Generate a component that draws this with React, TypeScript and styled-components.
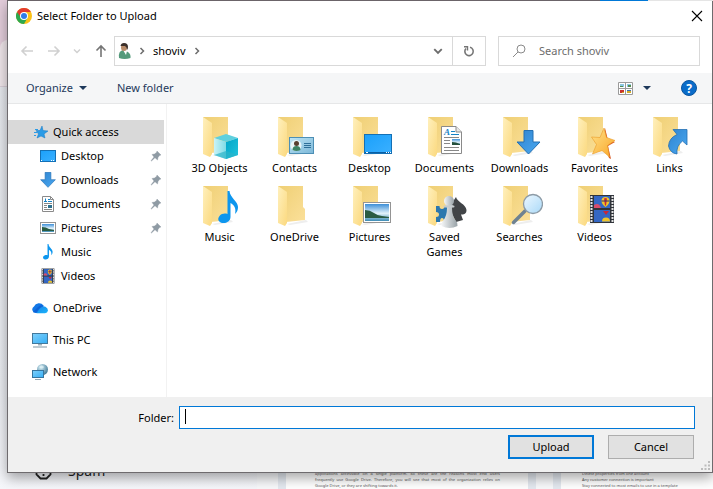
import React from "react";
import styled, { createGlobalStyle } from "styled-components";

const GlobalStyle = createGlobalStyle`
  *, *::before, *::after { box-sizing: border-box; }
  body { margin: 0; font-family: "Noto Sans", "Open Sans", sans-serif; font-size: 11px; line-height: 15px; color: #000; }
  button, input { font: inherit; color: inherit; }
  button { padding: 0; border: 0; background: none; }
  ul { list-style: none; margin: 0; padding: 0; }
  svg { display: block; flex: none; }
`;

const Page = styled.div`
  position: relative;
  min-height: 100vh;
  padding: 0 0 16px 7px;
  overflow: hidden;
`;

/* Browser window behind the dialog */
const Backdrop = styled.div`
  position: absolute;
  inset: 0;
  display: flex;
  background: linear-gradient(#e4e7ec, #eaecf1 80%, #f6f7fb);
`;
const MailNav = styled.div`
  width: 257px;
  flex: none;
  display: flex;
  flex-direction: column;
  justify-content: space-between;
`;
const TabStrip = styled.div`
  height: 87px;
  padding-top: 40px;
  background: #e3cddb;
  border-bottom: 1px solid #d9cfd8;
`;
const TabShape = styled.div`
  height: 46px;
  border-radius: 8px 0 0 0;
  background: #efe6ea;
`;
const NavItem = styled.div`
  display: flex;
  align-items: center;
  gap: 16px;
  padding: 0 0 8px 35px;
  font-size: 14px;
  line-height: 20px;
  color: #222;
`;
const Cards = styled.div`
  flex: 1;
  display: flex;
  align-items: flex-end;
  gap: 17px;
  padding-left: 21px;
  background: #f8f9fb;
`;
const Card = styled.div<{ $wide?: boolean }>`
  flex: ${(p) => (p.$wide ? "0 0 258px" : "1 1 0")};
  min-width: 0;
  padding: 0 28px;
  padding-left: ${(p) => (p.$wide ? 29 : 21)}px;
  border: 0 solid #e4e9f0;
  border-width: ${(p) => (p.$wide ? "0 8px" : "0 0 0 8px")};
  background: #fff;
  color: #555;
  font-size: 4px;
  line-height: 6px;
  white-space: nowrap;
`;
const Line = styled.div<{ $full?: boolean }>`
  text-align-last: ${(p) => (p.$full ? "justify" : "left")};
`;

const Dialog = styled.section`
  position: relative;
  display: flex;
  flex-direction: column;
  min-height: calc(100vh - 16px);
  border: 1px solid #6e6b6e;
  border-top: 0;
  background: #fff;
  box-shadow: 0 5px 12px rgba(0, 0, 0, 0.35);
`;
const TopEdge = styled.div`
  height: 1px;
  margin: 0 -1px;
  background: linear-gradient(to left, #e5e5e5 65px, #0078d7 65px 113px, #6b6469 113px);
`;
const TitleBar = styled.header`
  display: flex;
  align-items: center;
  gap: 5px;
  height: 30px;
  padding: 0 8px;
`;
const Title = styled.h1`
  flex: 1;
  margin: 0;
  padding-bottom: 2px;
  font-size: 11px;
  font-weight: 400;
`;
const IconButton = styled.button`
  display: flex;
  align-items: center;
  justify-content: center;
`;
const AddressRow = styled.div`
  display: flex;
  align-items: center;
  padding: 5px 12px 7px;
`;
const History = styled.div`
  display: flex;
  align-items: center;
  width: 94px;
  justify-content: space-between;
  padding-right: 6px;
`;
const AddressBox = styled.div`
  flex: 1;
  display: flex;
  height: 30px;
  margin-right: 12px;
  border: 1px solid #d9d9d9;
`;
const Crumbs = styled.div`
  flex: 1;
  display: flex;
  align-items: center;
  gap: 7px;
  padding: 0 9px 0 3px;
`;
const Crumb = styled.span`
  padding-bottom: 2px;
`;
const Spacer = styled.div`
  flex: 1;
`;
const RefreshButton = styled(IconButton)`
  width: 33px;
  border-left: 1px solid #d9d9d9;
`;
const SearchBox = styled.label`
  display: flex;
  align-items: center;
  gap: 13px;
  width: 202px;
  height: 30px;
  padding: 0 13px;
  border: 1px solid #d9d9d9;
`;
const SearchInput = styled.input`
  flex: 1;
  min-width: 0;
  padding: 0 0 2px;
  border: 0;
  outline: 0;
  &::placeholder { color: #6d6d6d; opacity: 1; }
`;

const Toolbar = styled.div`
  display: flex;
  align-items: center;
  height: 31px;
  padding: 0 15px 0 18px;
  border-bottom: 1px solid #e6e7e8;
  background: #f5f6f7;
  color: #1e395b;
`;
const ToolButton = styled.button<{ $after?: number }>`
  display: flex;
  align-items: center;
  gap: 6px;
  margin-right: ${(p) => p.$after ?? 0}px;
`;
const ToolLabel = styled.span`
  padding-bottom: 2px;
`;

const Body = styled.div`
  flex: 1;
  display: flex;
`;
const Sidebar = styled.nav`
  width: 159px;
  flex: none;
  display: flex;
  flex-direction: column;
  gap: 8px;
  padding: 16px 2px 0 0;
  border-right: 1px solid #f2f2f2;
`;
const TreeRow = styled.button<{ $child?: boolean; $selected?: boolean }>`
  display: flex;
  align-items: center;
  gap: 5px;
  width: 100%;
  height: 24px;
  padding: 0 2px 0 ${(p) => (p.$child ? 32 : 24)}px;
  background: ${(p) => (p.$selected ? "#d9d9d9" : "transparent")};
  text-align: left;
`;
const TreeLabel = styled.span`
  flex: 1;
  padding-bottom: 2px;
`;
const Files = styled.ul`
  && { padding: 9px 5px 0 15px; }
  flex: 1;
  display: grid;
  grid-template-columns: repeat(auto-fill, 75px);
  gap: 7px 0;
  align-content: start;
`;
const Tile = styled.button`
  display: flex;
  flex-direction: column;
  align-items: center;
  width: 75px;
  padding: 0 6px;
  text-align: center;
`;
const TileIcon = styled.svg`
  margin: 0 1px -1px 0;
`;

const Footer = styled.form`
  display: flex;
  flex-direction: column;
  gap: 6px;
  padding: 9px 17px 13px 8px;
  background: #f0f0f0;
  position: relative;
`;
const FieldRow = styled.div`
  display: flex;
  align-items: center;
  gap: 5px;
`;
const FieldLabel = styled.label`
  width: 158px;
  text-align: right;
`;
const Field = styled.div`
  flex: 1;
  display: flex;
  align-items: center;
  height: 23px;
  padding: 0 5px 2px;
  border: 1px solid #0078d7;
  background: #fff;
`;
const Caret = styled.span`
  width: 1px;
  height: 15px;
  background: #000;
`;
const FieldInput = styled.input`
  flex: 1;
  min-width: 0;
  padding: 0;
  border: 0;
  outline: 0;
  background: none;
  caret-color: transparent;
`;
const Actions = styled.div`
  display: flex;
  justify-content: flex-end;
  gap: 14px;
  padding-right: 1px;
`;
const ActionButton = styled.button<{ $primary?: boolean }>`
  width: 86px;
  height: 24px;
  padding-bottom: 2px;
  border: ${(p) => (p.$primary ? "2px solid #0078d7" : "1px solid #adadad")};
  background: #e1e1e1;
`;
const Grip = styled.svg`
  position: absolute;
  right: 2px;
  bottom: 2px;
`;
const HiddenDefs = styled.svg`
  position: absolute;
`;

function Gradient({ id, from, to, flat }: { id: string; from: string; to: string; flat?: boolean }) {
  return (
    <linearGradient id={id} x1="0" y1="0" x2="1" y2={flat ? "0" : "1"}>
      <stop offset="0" stopColor={from} />
      <stop offset="1" stopColor={to} />
    </linearGradient>
  );
}

function SharedDefs() {
  return (
    <HiddenDefs width="0" height="0" aria-hidden="true">
      <defs>
        <Gradient id="back" from="#efcf74" to="#fbe09a" />
        <Gradient id="leaf" from="#fff0bd" to="#fbd97f" />
        <Gradient id="screen" from="#1aa0fb" to="#3bb0ff" />
        <Gradient id="blue" from="#2f84d0" to="#4aa8f0" />
        <Gradient id="cubeL" from="#c9f3f7" to="#7fdbe6" flat />
        <Gradient id="cubeR" from="#00a5c8" to="#22c3dc" />
        <Gradient id="card" from="#bfe6f5" to="#7cb7d8" />
        <Gradient id="star" from="#ffe28a" to="#f9a526" />
        <Gradient id="lens" from="#eef8ff" to="#a9d9f8" />
        <Gradient id="pawn" from="#f4f6f7" to="#97a1a6" flat />
        <Gradient id="monitor" from="#7fd0fb" to="#35aef5" />
        <Gradient id="cloud" from="#1686e8" to="#1cb4fb" />
        <linearGradient id="sky" x1="0" y1="0" x2="0" y2="1">
          <stop offset="0" stopColor="#3d8fd8" />
          <stop offset="0.55" stopColor="#e3f3fb" />
          <stop offset="1" stopColor="#3c8bb5" />
        </linearGradient>
        <radialGradient id="globe" cx="0.35" cy="0.3" r="0.8">
          <stop offset="0" stopColor="#d5edf5" />
          <stop offset="1" stopColor="#34708f" />
        </radialGradient>
      </defs>
    </HiddenDefs>
  );
}

/* Overlay art, drawn in the 48×48 space of a folder tile */
const art = {
  cube: (
    <g>
      <path d="M31 21 43 25 31 29 19 25z" fill="#5fd0de" />
      <path d="M19 25 31 29V46L19 42z" fill="url(#cubeL)" />
      <path d="M43 25 31 29V46L43 42z" fill="url(#cubeR)" />
      <path d="M19 42 31 38 43 42 31 46z" fill="#2bb3c9" opacity=".7" />
    </g>
  ),
  contact: (
    <g>
      <rect x="19.500" y="24.500" width="24" height="16" fill="url(#card)" stroke="#4d8fb5" />
      <circle cx="26" cy="32.500" r="5.500" fill="#e9f5f8" />
      <circle cx="26.500" cy="30.500" r="2.500" fill="#594030" />
      <path d="M22.500 37q0-4 4-4t4 4q-4 2-8 0z" fill="#3c8365" />
      <path d="M34 30.500h7M34 32.500h7M34 34.500h7" stroke="#2f7099" />
    </g>
  ),
  desktop: (
    <g>
      <rect x="19.500" y="21.500" width="27" height="19" fill="url(#screen)" stroke="#1470b5" />
      <path d="M20 39h26v1H20z" fill="#0a5ea3" />
      <path d="M21 39.500h2M41 39.500h1M43 39.500h1M45 39.500h1" stroke="#fff" />
    </g>
  ),
  document: (
    <g>
      <path d="M21.500 13.500H36L41.500 19V40.500h-20z" fill="#fff" stroke="#8a8a8a" />
      <path d="M36 13.500V19h5.500" fill="#e8e8e8" stroke="#8a8a8a" />
      <text x="24" y="22" fontFamily="Liberation Serif, serif" fontWeight="700" fontStyle="italic" fontSize="9" fill="#1783c5">A</text>
      <path d="M31 18.500h4M31 21.500h8" stroke="#1783c5" />
      <path d="M24 24.500h15M24 27.500h6M24 30.500h6M24 34.500h15M24 37.500h15" stroke="#888" />
      <rect x="32" y="26" width="8" height="6" fill="url(#sky)" />
      <path d="M32 29q4 0 8 2v1h-8z" fill="#24503d" />
    </g>
  ),
  download: <path d="M29 17.500h9V29h7L33.500 41 22 29h7z" fill="url(#blue)" stroke="#2470b3" />,
  star: (
    <g>
      <path d="M35 15l-3 10 7 20 2 1-3-13 7-4-7-2z" fill="#d9561e" />
      <path d="M34 15l2.500 9.500 8.500 3-7.500 5L39.500 44 32 37.500 22.500 41l4-9.500L21.500 24l8.500.5z" fill="url(#star)" stroke="#e99a26" strokeWidth=".6" />
    </g>
  ),
  link: <path d="M28 16.500H42V32L37.500 28Q31 33 32 41 25 40 23.500 33 24 25 32 21.500z" fill="url(#blue)" stroke="#2470b3" strokeWidth=".8" />,
  music: (
    <path d="M32.500 9h2c.5 7 8.500 10 8.500 16 0 3-1 5-3 7 1.500-6-1-9-4.500-11v14c0 4-4 6.500-8 6-4-.5-5.500-4-3-7 2-2.500 5.500-3 8-2z" fill="#0d96ee" />
  ),
  picture: (
    <g>
      <rect x="18.500" y="20.500" width="27" height="20" fill="#fff" stroke="#949494" />
      <rect x="20" y="22" width="24" height="17" fill="url(#sky)" />
      <path d="M20 28q5 0 9 3t8 3l7 1v1H20z" fill="#2a5c43" />
    </g>
  ),
  games: (
    <g>
      <path d="M16 24h3.500q0 3 2.500 3t2.500-3H28v15h-4q0-3-2-3t-2 4h-4v-5q3 0 3-2.500T16 30z" fill="#2c78ae" />
      <path d="M36 15c1 5 10 7 10.500 13 0 4-3 5-5.500 4.500l2 5.500-7 2-4-8V21z" fill="#414447" />
      <path d="M26 23h7l-1 3q0 8 4 13 2 2 1.500 5-8 4-16 0Q21 41 23 39q4-5 4-13z" fill="url(#pawn)" />
      <circle cx="29" cy="19" r="5" fill="url(#pawn)" />
      <path d="M24.500 24.500h9" stroke="#c5cbce" strokeWidth="2" strokeLinecap="round" />
    </g>
  ),
  search: (
    <g>
      <path d="M30 29 18.500 40.500" stroke="#6f8291" strokeWidth="3.500" strokeLinecap="round" />
      <circle cx="38" cy="22" r="9.500" fill="url(#lens)" stroke="#8d9ba6" strokeWidth="1.300" />
    </g>
  ),
  video: (
    <g>
      <rect x="20" y="13" width="24" height="28" fill="#30343a" />
      <path d="M21.500 14v26M42.500 14v26" stroke="#e4e4e4" strokeWidth="2" strokeDasharray="2 1" />
      <rect x="24" y="14" width="16" height="12" fill="#3467c4" />
      <rect x="24" y="28" width="16" height="12" fill="#3467c4" />
      <path d="M24 23q5-3 7 3h-7z" fill="#d84c6c" />
      <path d="M31.500 19a4 4 0 0 1 8 0q0 3-4 6-4-3-4-6zM32 39.500a4 4 0 0 1 8 0z" fill="#f0c52a" />
      <path d="M34 16.500q1.500-1 3 0l-1 7h-1zM33 29h6l-3 4z" fill="#c8283a" />
      <path d="M31.500 19h8" stroke="#353070" strokeWidth="1" />
    </g>
  ),
};
type ArtName = keyof typeof art;

function FolderIcon({ overlay }: { overlay?: ArtName }) {
  return (
    <TileIcon width="48" height="48" viewBox="0 0 48 48" aria-hidden="true">
      <path d="M17 42 36 38 38 40 20 43z" fill="#eee" />
      <path d="M8 4H33V25l2 2V38L16 40 8 36z" fill="url(#back)" />
      <path d="M8 4 17 10V41l-2 3-7-3z" fill="url(#leaf)" />
      {overlay && art[overlay]}
    </TileIcon>
  );
}

function SmallArt({ name, box }: { name: ArtName; box: string }) {
  return (
    <svg width="16" height="16" viewBox={box} aria-hidden="true">
      {art[name]}
    </svg>
  );
}

const SmallDesktop = () => (
  <svg width="16" height="16" viewBox="0 0 16 16" aria-hidden="true">
    <rect x=".5" y="2.500" width="15" height="11" fill="url(#screen)" stroke="#1470b5" />
    <path d="M1 12.500h1M11 12.500h1M13 12.500h1" stroke="#fff" />
  </svg>
);
const SmallDocument = () => (
  <svg width="16" height="16" viewBox="0 0 16 16" aria-hidden="true">
    <path d="M2.500.5h8l3 3v12h-11z" fill="#fff" stroke="#8a8a8a" />
    <path d="M10.500.5v3h3" fill="none" stroke="#8a8a8a" />
    <path d="M4 5.500h3M8 3.500h2M8 5.500h4M5.500 2.500v3" stroke="#1783c5" />
    <path d="M4 7.500h8M4 9.500h3M4 11.500h3M4 13.500h8" stroke="#888" />
    <path d="M8 9h4v3H8z" fill="#2d6f8c" />
  </svg>
);
const SmallPicture = () => (
  <svg width="16" height="16" viewBox="0 0 16 16" aria-hidden="true">
    <rect x=".5" y="2.500" width="15" height="11" fill="#fff" stroke="#949494" />
    <rect x="2" y="4" width="12" height="8" fill="url(#sky)" />
    <path d="M2 7q4 0 7 2l5 1v1H2z" fill="#2a5c43" />
  </svg>
);
const QuickStar = () => (
  <svg width="16" height="16" viewBox="0 0 16 16" aria-hidden="true">
    <path d="M10 2l1 4.500 5 .5-4 3 1 4-4-2-4 2 1.500-4L4 6.500h4z" fill="#2b9be6" stroke="#1479c4" strokeWidth=".5" />
    <path d="M3 5.500h3M2 8.500h3M2 11.500h2" stroke="#2b9be6" />
  </svg>
);
const CloudIcon = () => (
  <svg width="16" height="16" viewBox="0 0 16 16" aria-hidden="true">
    <path d="M3.500 13A3.500 3.500 0 0 1 2 6.500 5.500 5.500 0 0 1 11.500 5.500L12 13z" fill="#1377e6" />
    <path d="M5 13Q8 6 13 6.500 16 8 16 10.500 15.500 13 13 13.200H4z" fill="url(#cloud)" />
    <path d="M1 12Q4 14 7 9q2-3 5-3Q9 4 6 7T1 12z" fill="#0a55cf" opacity=".6" />
  </svg>
);
const PcIcon = () => (
  <svg width="16" height="16" viewBox="0 0 16 16" aria-hidden="true">
    <rect x=".5" y="1.500" width="15" height="10" fill="url(#monitor)" stroke="#43799c" />
    <path d="M6 12h4v1.500H6z" fill="#9fb0ba" />
    <path d="M1 15h14" stroke="#93a7b3" strokeWidth="1.200" />
  </svg>
);
const NetworkIcon = () => (
  <svg width="16" height="16" viewBox="0 0 16 16" aria-hidden="true">
    <circle cx="10.500" cy="5.500" r="5.500" fill="url(#globe)" />
    <path d="M7 3q3-3 5 0-2 3-5 0z" fill="#e3f3f7" opacity=".7" />
    <rect x=".5" y="6.500" width="11" height="7" fill="url(#monitor)" stroke="#35759f" />
    <path d="M3 15.500h6" stroke="#93a7b3" />
  </svg>
);
const PinIcon = () => (
  <svg width="12" height="12" viewBox="0 0 12 12" aria-hidden="true">
    <path d="M7 1l4 4-1.500.5L8 7.500 7.500 10 5 7.700 1.500 11 1 10.700 4 7 2 4.500 4.500 4 6.500 2.500z" fill="#8f9ba4" stroke="#8f9ba4" strokeWidth=".4" />
  </svg>
);
const ChromeIcon = () => (
  <svg width="16" height="16" viewBox="0 0 16 16" aria-hidden="true">
    <circle cx="8" cy="8" r="8" fill="#fbc116" />
    <path d="M8 8 1.070 4A8 8 0 0 0 8 16L11.460 10z" fill="#2da94f" />
    <path d="M1.070 4A8 8 0 0 1 14.930 4H8L5 9.500z" fill="#e33b2e" />
    <circle cx="8" cy="8" r="4" fill="#fff" />
    <circle cx="8" cy="8" r="3" fill="#2f7de9" />
  </svg>
);
const Arrow = ({ turn, color }: { turn: number; color: string }) => (
  <svg width="14" height="14" viewBox="0 0 14 14" aria-hidden="true">
    <path d="M13 7H2M6.500 2.500 2 7l4.500 4.500" transform={`rotate(${turn} 7 7)`} fill="none" stroke={color} strokeWidth="1.600" />
  </svg>
);
const Chevron = ({ turn = 0, size, color }: { turn?: number; size: number; color: string }) => (
  <svg width={size} height={size} viewBox="0 0 8 8" aria-hidden="true">
    <path d="M1 2.500 4 5.500 7 2.500" transform={`rotate(${turn} 4 4)`} fill="none" stroke={color} strokeWidth="1.500" />
  </svg>
);
const DropTriangle = () => (
  <svg width="8" height="4" viewBox="0 0 8 4" aria-hidden="true">
    <path d="M0 0h8L4 4z" fill="#1e395b" />
  </svg>
);
const UserIcon = () => (
  <svg width="13" height="18" viewBox="0 0 13 18" aria-hidden="true">
    <path d="M1 16Q0 9 5 8l5 2q3 2 2.500 6-6 2-11.500 0z" fill="#549a7b" />
    <path d="M5 8l3 5 1-4z" fill="#fff" />
    <ellipse cx="6" cy="5.500" rx="3" ry="3.500" fill="#b98d6b" />
    <path d="M2.500 4Q3 1 6 1q4 0 4 4 0 2-1 3 0-3-2-4-3 0-4.500 0z" fill="#3b302b" />
  </svg>
);

type TreeNode = { label: string; icon: React.ReactNode; pinned?: boolean };
const quickAccess: TreeNode[] = [
  { label: "Desktop", icon: <SmallDesktop />, pinned: true },
  { label: "Downloads", icon: <SmallArt name="download" box="21 17 25 25" />, pinned: true },
  { label: "Documents", icon: <SmallDocument />, pinned: true },
  { label: "Pictures", icon: <SmallPicture />, pinned: true },
  { label: "Music", icon: <SmallArt name="music" box="17 9 33 33" /> },
  { label: "Videos", icon: <SmallArt name="video" box="17 12 30 30" /> },
];
const roots: TreeNode[] = [
  { label: "OneDrive", icon: <CloudIcon /> },
  { label: "This PC", icon: <PcIcon /> },
  { label: "Network", icon: <NetworkIcon /> },
];
const folders: { label: string; overlay?: ArtName }[] = [
  { label: "3D Objects", overlay: "cube" },
  { label: "Contacts", overlay: "contact" },
  { label: "Desktop", overlay: "desktop" },
  { label: "Documents", overlay: "document" },
  { label: "Downloads", overlay: "download" },
  { label: "Favorites", overlay: "star" },
  { label: "Links", overlay: "link" },
  { label: "Music", overlay: "music" },
  { label: "OneDrive" },
  { label: "Pictures", overlay: "picture" },
  { label: "Saved Games", overlay: "games" },
  { label: "Searches", overlay: "search" },
  { label: "Videos", overlay: "video" },
];

function MailPage() {
  return (
    <Backdrop aria-hidden="true">
      <MailNav>
        <TabStrip>
          <TabShape />
        </TabStrip>
        <NavItem>
          <svg width="17" height="17" viewBox="0 0 17 17">
            <path d="M5.500 1.500h6l4 4v6l-4 4h-6l-4-4v-6zM8.500 4v5M8.500 11v2" fill="none" stroke="#222" strokeWidth="1.800" />
          </svg>
          Spam
        </NavItem>
      </MailNav>
      <Cards>
        <Card $wide>
          <Line $full>applications accessible on a single platform. So these are the reasons most end users</Line>
          <Line $full>frequently use Google Drive. Therefore, you will see that most of the organization relies on</Line>
          <Line>Google Drive, or they are shifting towards it.</Line>
        </Card>
        <Card>
          <Line>Delete properties from one account</Line>
          <Line>Any customer connection is important</Line>
          <Line>Stay connected to most emails to use in a template</Line>
        </Card>
      </Cards>
    </Backdrop>
  );
}

export default function App() {
  return (
    <Page>
      <GlobalStyle />
      <SharedDefs />
      <MailPage />
      <Dialog role="dialog" aria-labelledby="dialog-title">
        <TopEdge />
        <TitleBar>
          <ChromeIcon />
          <Title id="dialog-title">Select Folder to Upload</Title>
          <IconButton type="button" aria-label="Close">
            <svg width="14" height="14" viewBox="0 0 14 14" aria-hidden="true">
              <path d="M2 2 12 12M12 2 2 12" stroke="#000" strokeWidth="1.100" />
            </svg>
          </IconButton>
        </TitleBar>

        <AddressRow>
          <History>
            <IconButton type="button" aria-label="Back"><Arrow turn={0} color="#d0d0d0" /></IconButton>
            <IconButton type="button" aria-label="Forward"><Arrow turn={180} color="#d0d0d0" /></IconButton>
            <IconButton type="button" aria-label="Recent locations"><Chevron size={8} color="#d0d0d0" /></IconButton>
            <IconButton type="button" aria-label="Up"><Arrow turn={90} color="#757575" /></IconButton>
          </History>
          <AddressBox>
            <Crumbs>
              <UserIcon />
              <Chevron turn={-90} size={8} color="#6d6d6d" />
              <Crumb>shoviv</Crumb>
              <Chevron turn={-90} size={8} color="#6d6d6d" />
              <Spacer />
              <IconButton type="button" aria-label="Previous locations"><Chevron size={10} color="#6d6d6d" /></IconButton>
            </Crumbs>
            <RefreshButton type="button" aria-label="Refresh">
              <svg width="12" height="12" viewBox="0 0 12 12" aria-hidden="true">
                <path d="M3 3.500A4.200 4.200 0 1 0 7 2.300" fill="none" stroke="#757575" strokeWidth="1.600" />
                <path d="M1 1.700H4.500V5.500" fill="none" stroke="#757575" strokeWidth="1.400" />
              </svg>
            </RefreshButton>
          </AddressBox>
          <SearchBox>
            <svg width="14" height="14" viewBox="0 0 14 14" aria-hidden="true">
              <circle cx="9" cy="5" r="4" fill="none" stroke="#8a8a8a" />
              <path d="M6 8 1 13" stroke="#8a8a8a" />
            </svg>
            <SearchInput type="text" placeholder="Search shoviv" aria-label="Search shoviv" />
          </SearchBox>
        </AddressRow>

        <Toolbar>
          <ToolButton type="button" $after={30}>
            <ToolLabel>Organize</ToolLabel>
            <DropTriangle />
          </ToolButton>
          <ToolButton type="button">
            <ToolLabel>New folder</ToolLabel>
          </ToolButton>
          <Spacer />
          <ToolButton type="button" $after={10} aria-label="Change your view">
            <svg width="15" height="13" viewBox="0 0 15 13" aria-hidden="true">
              <path d="M.5.5h14v12H.5zM.5 6.500h14M7.500.5v12" fill="#fff" stroke="#9a9a9a" />
              <path d="M2 2h4v3H2zM9 2h4v3H9z" fill="#8cc7e3" />
              <path d="M2 4h3v1H2zM10 3h3v2h-3z" fill="#538a4c" />
              <path d="M2 8h4v3H2z" fill="#c9342c" />
              <path d="M4 10h2v1H4zM9 9h4v2H9z" fill="#d6ad24" />
              <path d="M9 8h4v1H9z" fill="#3c6fb0" />
            </svg>
          </ToolButton>
          <ToolButton type="button" $after={30} aria-label="More options">
            <DropTriangle />
          </ToolButton>
          <IconButton type="button" aria-label="Help">
            <svg width="16" height="16" viewBox="0 0 16 16" aria-hidden="true">
              <circle cx="8" cy="8" r="7.500" fill="#0a6cc9" stroke="#0a559e" />
              <text x="8" y="12.500" textAnchor="middle" fontFamily="Noto Sans, sans-serif" fontWeight="700" fontSize="12" fill="#fff">?</text>
            </svg>
          </IconButton>
        </Toolbar>

        <Body>
          <Sidebar aria-label="Locations">
            <div>
              <TreeRow type="button" $selected>
                <QuickStar />
                <TreeLabel>Quick access</TreeLabel>
              </TreeRow>
              {quickAccess.map((n) => (
                <TreeRow key={n.label} type="button" $child>
                  {n.icon}
                  <TreeLabel>{n.label}</TreeLabel>
                  {n.pinned && <PinIcon />}
                </TreeRow>
              ))}
            </div>
            {roots.map((n) => (
              <TreeRow key={n.label} type="button">
                {n.icon}
                <TreeLabel>{n.label}</TreeLabel>
              </TreeRow>
            ))}
          </Sidebar>
          <Files>
            {folders.map((f) => (
              <li key={f.label}>
                <Tile type="button">
                  <FolderIcon overlay={f.overlay} />
                  {f.label}
                </Tile>
              </li>
            ))}
          </Files>
        </Body>

        <Footer onSubmit={(e) => e.preventDefault()}>
          <FieldRow>
            <FieldLabel htmlFor="folder">Folder:</FieldLabel>
            <Field>
              <Caret />
              <FieldInput id="folder" type="text" />
            </Field>
          </FieldRow>
          <Actions>
            <ActionButton type="submit" $primary>Upload</ActionButton>
            <ActionButton type="button">Cancel</ActionButton>
          </Actions>
          <Grip width="9" height="9" viewBox="0 0 9 9" aria-hidden="true">
            <path d="M7 0h2v2H7zM7 3.500h2v2H7zM3.500 3.500h2v2h-2zM7 7h2v2H7zM3.500 7h2v2h-2zM0 7h2v2H0z" fill="#bcbcbc" />
          </Grip>
        </Footer>
      </Dialog>
    </Page>
  );
}
